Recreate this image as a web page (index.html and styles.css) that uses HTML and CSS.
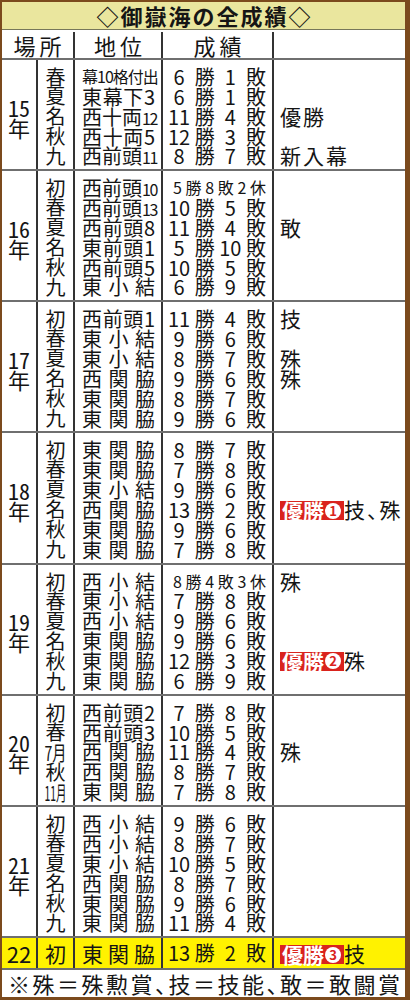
FILE: index.html
```html
<!DOCTYPE html>
<html lang="ja">
<head>
<meta charset="utf-8">
<title>御嶽海の全成績</title>
<link rel="stylesheet" href="styles.css">
</head>
<body>
<div class="sheet">
  <h1 class="title">◇御嶽海の全成績◇</h1>

  <div class="row head">
    <div class="c bsh">場所</div>
    <div class="c rank">地位</div>
    <div class="c rec">成績</div>
    <div class="c note"></div>
  </div>

  <div class="row blk">
    <div class="c yr"><span class="tcy">15</span>年</div>
    <div class="c bs">春夏名秋九</div>
    <div class="c rank lines">
      <div class="tiny">幕10格付出</div>
      <div>東幕下3</div>
      <div>西十両<span class="d">12</span></div>
      <div>西十両5</div>
      <div>西前頭<span class="d">11</span></div>
    </div>
    <div class="c rec lines">
      <div><span class="n">6</span>勝<span class="n">1</span>敗</div>
      <div><span class="n">6</span>勝<span class="n">1</span>敗</div>
      <div><span class="n">11</span>勝<span class="n">4</span>敗</div>
      <div><span class="n">12</span>勝<span class="n">3</span>敗</div>
      <div><span class="n">8</span>勝<span class="n">7</span>敗</div>
    </div>
    <div class="c note lines"><div></div><div></div><div>優勝</div><div></div><div>新入幕</div></div>
  </div>

  <div class="row blk">
    <div class="c yr"><span class="tcy">16</span>年</div>
    <div class="c bs">初春夏名秋九</div>
    <div class="c rank lines">
      <div>西前頭<span class="d">10</span></div>
      <div>西前頭<span class="d">13</span></div>
      <div>西前頭8</div>
      <div>東前頭1</div>
      <div>西前頭5</div>
      <div>東小結</div>
    </div>
    <div class="c rec lines">
      <div class="sm"><span>5</span>勝<span>8</span>敗<span>2</span>休</div>
      <div><span class="n">10</span>勝<span class="n">5</span>敗</div>
      <div><span class="n">11</span>勝<span class="n">4</span>敗</div>
      <div><span class="n">5</span>勝<span class="n">10</span>敗</div>
      <div><span class="n">10</span>勝<span class="n">5</span>敗</div>
      <div><span class="n">6</span>勝<span class="n">9</span>敗</div>
    </div>
    <div class="c note lines"><div></div><div></div><div>敢</div><div></div><div></div><div></div></div>
  </div>

  <div class="row blk">
    <div class="c yr"><span class="tcy">17</span>年</div>
    <div class="c bs">初春夏名秋九</div>
    <div class="c rank lines">
      <div>西前頭1</div>
      <div>東小結</div>
      <div>東小結</div>
      <div>西関脇</div>
      <div>東関脇</div>
      <div>東関脇</div>
    </div>
    <div class="c rec lines">
      <div><span class="n">11</span>勝<span class="n">4</span>敗</div>
      <div><span class="n">9</span>勝<span class="n">6</span>敗</div>
      <div><span class="n">8</span>勝<span class="n">7</span>敗</div>
      <div><span class="n">9</span>勝<span class="n">6</span>敗</div>
      <div><span class="n">8</span>勝<span class="n">7</span>敗</div>
      <div><span class="n">9</span>勝<span class="n">6</span>敗</div>
    </div>
    <div class="c note lines"><div>技</div><div></div><div>殊</div><div>殊</div><div></div><div></div></div>
  </div>

  <div class="row blk">
    <div class="c yr"><span class="tcy">18</span>年</div>
    <div class="c bs">初春夏名秋九</div>
    <div class="c rank lines">
      <div>東関脇</div>
      <div>東関脇</div>
      <div>東小結</div>
      <div>西関脇</div>
      <div>東関脇</div>
      <div>東関脇</div>
    </div>
    <div class="c rec lines">
      <div><span class="n">8</span>勝<span class="n">7</span>敗</div>
      <div><span class="n">7</span>勝<span class="n">8</span>敗</div>
      <div><span class="n">9</span>勝<span class="n">6</span>敗</div>
      <div><span class="n">13</span>勝<span class="n">2</span>敗</div>
      <div><span class="n">9</span>勝<span class="n">6</span>敗</div>
      <div><span class="n">7</span>勝<span class="n">8</span>敗</div>
    </div>
    <div class="c note lines"><div></div><div></div><div></div><div><span class="win">優勝<span class="o">1</span></span>技、殊</div><div></div><div></div></div>
  </div>

  <div class="row blk">
    <div class="c yr"><span class="tcy">19</span>年</div>
    <div class="c bs">初春夏名秋九</div>
    <div class="c rank lines">
      <div>西小結</div>
      <div>東小結</div>
      <div>西小結</div>
      <div>東関脇</div>
      <div>東関脇</div>
      <div>東関脇</div>
    </div>
    <div class="c rec lines">
      <div class="sm"><span>8</span>勝<span>4</span>敗<span>3</span>休</div>
      <div><span class="n">7</span>勝<span class="n">8</span>敗</div>
      <div><span class="n">9</span>勝<span class="n">6</span>敗</div>
      <div><span class="n">9</span>勝<span class="n">6</span>敗</div>
      <div><span class="n">12</span>勝<span class="n">3</span>敗</div>
      <div><span class="n">6</span>勝<span class="n">9</span>敗</div>
    </div>
    <div class="c note lines"><div>殊</div><div></div><div></div><div></div><div><span class="win">優勝<span class="o">2</span></span>殊</div><div></div></div>
  </div>

  <div class="row blk">
    <div class="c yr"><span class="tcy">20</span>年</div>
    <div class="c bs">初春<span class="tcy">7月</span>秋<span class="tcy">11月</span></div>
    <div class="c rank lines">
      <div>西前頭2</div>
      <div>西前頭3</div>
      <div>西関脇</div>
      <div>西関脇</div>
      <div>東関脇</div>
    </div>
    <div class="c rec lines">
      <div><span class="n">7</span>勝<span class="n">8</span>敗</div>
      <div><span class="n">10</span>勝<span class="n">5</span>敗</div>
      <div><span class="n">11</span>勝<span class="n">4</span>敗</div>
      <div><span class="n">8</span>勝<span class="n">7</span>敗</div>
      <div><span class="n">7</span>勝<span class="n">8</span>敗</div>
    </div>
    <div class="c note lines"><div></div><div></div><div>殊</div><div></div><div></div></div>
  </div>

  <div class="row blk">
    <div class="c yr"><span class="tcy">21</span>年</div>
    <div class="c bs">初春夏名秋九</div>
    <div class="c rank lines">
      <div>西小結</div>
      <div>西小結</div>
      <div>東小結</div>
      <div>西関脇</div>
      <div>東関脇</div>
      <div>東関脇</div>
    </div>
    <div class="c rec lines">
      <div><span class="n">9</span>勝<span class="n">6</span>敗</div>
      <div><span class="n">8</span>勝<span class="n">7</span>敗</div>
      <div><span class="n">10</span>勝<span class="n">5</span>敗</div>
      <div><span class="n">8</span>勝<span class="n">7</span>敗</div>
      <div><span class="n">9</span>勝<span class="n">6</span>敗</div>
      <div><span class="n">11</span>勝<span class="n">4</span>敗</div>
    </div>
    <div class="c note lines"><div></div><div></div><div></div><div></div><div></div><div></div></div>
  </div>

  <div class="row latest">
    <div class="c yr22">22</div>
    <div class="c bs22">初</div>
    <div class="c rank">東関脇</div>
    <div class="c rec"><span class="n">13</span>勝<span class="n">2</span>敗</div>
    <div class="c note"><span class="win">優勝<span class="o">3</span></span>技</div>
  </div>

  <p class="foot">※殊＝殊勲賞、技＝技能、敢＝敢闘賞</p>
</div>
</body>
</html>
```

FILE: styles.css
```css
* {
  box-sizing: border-box;
  margin: 0;
  padding: 0;
}

body {
  margin: 0;
  background: #fff;
  color: #151515;
  font-family: "Noto Sans CJK JP", "Noto Sans CJK SC", sans-serif;
  font-feature-settings: "halt";
}

.sheet {
  width: 410px;
  height: 1000px;
  border-style: solid;
  border-color: #7b4a1d;
  border-width: 2px 5px 3px 2px;
  display: flex;
  flex-direction: column;
  overflow: hidden;
  font-size: 20px;
}

/* title band */
.title {
  flex: none;
  height: 28px;
  background: #eae69e;
  border-bottom: 1px solid #77775a;
  font-size: 22px;
  font-weight: 700;
  line-height: 27px;
  letter-spacing: 2px;
  padding-left: 2px;
  text-align: center;
}

/* rows and columns */
.row {
  flex: none;
  display: flex;
  border-bottom: 2px solid #6f6f6f;
}

.c {
  border-right: 2px solid #333;
}

.c:last-child {
  border-right: 0;
  flex: 1;
}

.yr, .yr22 { width: 36px; }
.bs, .bs22 { width: 37px; }
.bsh { width: 73px; }
.rank { width: 88px; }
.rec { width: 111px; }

/* column headings */
.head {
  height: 30px;
  padding-top: 2px;
  font-size: 22px;
  line-height: 26px;
  letter-spacing: 4px;
  text-align: center;
}

.head .c {
  padding-left: 4px;
}

/* year blocks */
.blk .c {
  padding: 7px 0 3px;
}

.lines > div {
  height: 19.85px;
  line-height: 19.85px;
}

/* year: set vertically, digits upright in one cell */
.yr {
  writing-mode: vertical-rl;
  text-align: center;
  font-size: 22px;
  letter-spacing: -2px;
  line-height: 34px;
}

/* basho initials: one vertical column */
.bs {
  writing-mode: vertical-rl;
  line-height: 35px;
  letter-spacing: -0.15px;
}

.tcy {
  text-combine-upright: all;
}

.blk .rank {
  padding-left: 7px;
  padding-right: 6px;
}

.rank > div {
  text-align: justify;
  text-align-last: justify;
  word-break: keep-all;
}

.rank .tiny {
  font-size: 16px;
  letter-spacing: -1px;
}

.rank .d {
  font-size: 16px;
  letter-spacing: -1.5px;
}

.blk .rec {
  padding-left: 4px;
  padding-right: 6px;
}

.rec > div {
  display: flex;
  justify-content: space-between;
}

.rec .n {
  width: 24px;
  text-align: center;
}

.rec .sm {
  font-size: 16px;
  padding-left: 6px;
}

.blk .note {
  padding-left: 6px;
}

.note {
  font-size: 21px;
  letter-spacing: 2px;
  white-space: nowrap;
}

/* winner badge */
.win {
  display: inline-block;
  height: 19px;
  line-height: 19px;
  padding: 0 3px 0 2px;
  background: #d9231d;
  color: #fff;
  font-weight: 700;
  letter-spacing: 0;
  vertical-align: -1px;
}

.win .o {
  display: inline-block;
  width: 16px;
  height: 16px;
  margin: 1.5px 0 0 1px;
  border-radius: 50%;
  background: #fff;
  color: #d9231d;
  font-size: 13px;
  line-height: 15px;
  text-align: center;
  vertical-align: top;
}

/* latest basho row */
.latest {
  height: 32px;
  background: #fff200;
  font-size: 21px;
  line-height: 30px;
}

.yr22 {
  font-size: 22px;
  text-align: center;
}

.bs22 {
  text-align: center;
}

.latest .rank {
  padding: 0 6px 0 7px;
  text-align: justify;
  text-align-last: justify;
}

.latest .rec {
  display: flex;
  justify-content: space-between;
  padding: 0 6px 0 4px;
  font-size: 20px;
}

.latest .note {
  padding-left: 6px;
}

/* footnote */
.foot {
  flex: 1;
  padding-left: 6px;
  font-size: 22px;
  line-height: 27px;
  letter-spacing: 2.5px;
  white-space: nowrap;
}
```
